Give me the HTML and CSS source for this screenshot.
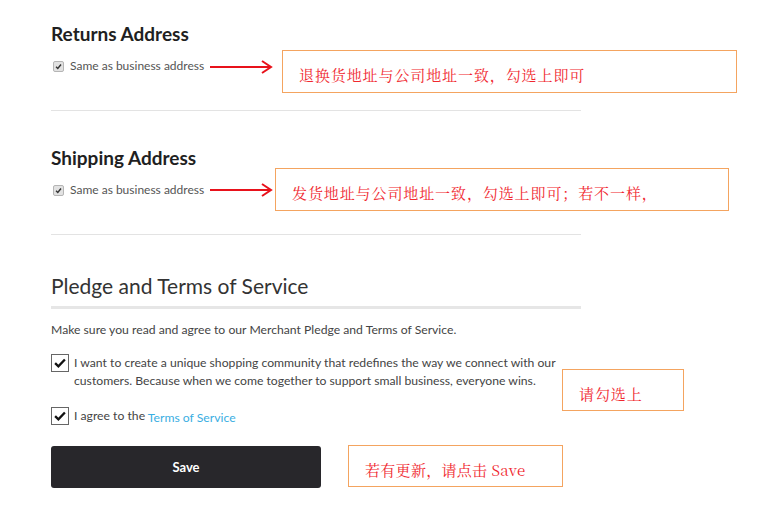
FILE: index.html
```html
<!DOCTYPE html>
<html lang="en">
<head>
    <meta charset="UTF-8">
    <title>Store Settings</title>
    <link rel="stylesheet" href="styles.css">
</head>
<body>
<div class="page">
    <div class="form">
        <section class="block">
            <h2 class="block-title">Returns Address</h2>
            <label class="small-check">
                <span class="mini-box"><svg viewBox="0 0 10 10"><path d="M2.3 5.2 L4.2 7.1 L7.8 2.8" fill="none" stroke="#333" stroke-width="1.6"/></svg></span>
                Same as business address
            </label>
        </section>
        <hr class="divider">
        <section class="block">
            <h2 class="block-title">Shipping Address</h2>
            <label class="small-check">
                <span class="mini-box"><svg viewBox="0 0 10 10"><path d="M2.3 5.2 L4.2 7.1 L7.8 2.8" fill="none" stroke="#333" stroke-width="1.6"/></svg></span>
                Same as business address
            </label>
        </section>
        <hr class="divider last">
        <section class="pledge">
            <h2 class="pledge-title">Pledge and Terms of Service</h2>
            <p class="pledge-intro">Make sure you read and agree to our Merchant Pledge and Terms of Service.</p>
            <label class="big-check">
                <span class="check-box"><svg viewBox="0 0 18 18"><path d="M3.5 9.2 L7.2 12.8 L14.5 5" fill="none" stroke="#111" stroke-width="2.6"/></svg></span>
                <span>I want to create a unique shopping community that redefines the way we connect with our customers. Because when we come together to support small business, everyone wins.</span>
            </label>
            <label class="big-check second">
                <span class="check-box"><svg viewBox="0 0 18 18"><path d="M3.5 9.2 L7.2 12.8 L14.5 5" fill="none" stroke="#111" stroke-width="2.6"/></svg></span>
                <span>I agree to the <a class="tos" href="#">Terms of Service</a></span>
            </label>
            <button class="save" type="button">Save</button>
        </section>
    </div>

    <svg class="arrow arrow-one" viewBox="0 0 64 14"><path d="M0 7 H61 M52 1 L61 7 L52 13" fill="none" stroke="#e8121b" stroke-width="2"/></svg>
    <div class="note note-one">退换货地址与公司地址一致，勾选上即可</div>

    <svg class="arrow arrow-two" viewBox="0 0 64 14"><path d="M0 7 H61 M52 1 L61 7 L52 13" fill="none" stroke="#e8121b" stroke-width="2"/></svg>
    <div class="note note-two">发货地址与公司地址一致，勾选上即可；若不一样，</div>

    <div class="note note-three">请勾选上</div>
    <div class="note note-four">若有更新，请点击 Save</div>
</div>
</body>
</html>
```

FILE: styles.css
```css
body {
    margin: 0;
    background: #fff;
    font-family: Lato, "Noto Sans", sans-serif;
    color: #333;
}
.page {
    position: relative;
    width: 761px;
    height: 509px;
    overflow: hidden;
}
.form {
    width: 530px;
    padding: 22px 0 0 51px;
}
.block-title {
    margin: 0;
    font-size: 19px;
    line-height: 24px;
    font-weight: 700;
    color: #1f1f22;
}
.small-check {
    display: flex;
    align-items: center;
    gap: 6px;
    margin-top: 12px;
    font-size: 12px;
    line-height: 16px;
    color: #555;
}
.mini-box {
    display: block;
    width: 9px;
    height: 9px;
    margin-left: 2px;
    border: 1px solid #b5b5b5;
    border-radius: 2px;
    background: #e2e2e2;
}
.mini-box svg {
    display: block;
    width: 9px;
    height: 9px;
}
.divider {
    margin: 36px 0 35px;
    border: 0;
    border-top: 1px solid #e3e3e3;
}
.divider.last {
    margin-bottom: 38px;
}
.pledge-title {
    margin: 0;
    padding-bottom: 7px;
    border-bottom: 3px solid #e6e6e6;
    font-size: 21px;
    line-height: 26px;
    font-weight: 400;
    color: #333;
}
.pledge-intro {
    margin: 13px 0 0;
    font-size: 12.2px;
    line-height: 16px;
    color: #444;
}
.big-check {
    display: flex;
    align-items: flex-start;
    gap: 5px;
    margin-top: 16px;
    font-size: 12.2px;
    line-height: 18px;
    color: #444;
}
.big-check.second {
    margin-top: 17px;
}
.check-box {
    flex: none;
    width: 16px;
    height: 16px;
    border: 1px solid #666;
    background: #fff;
}
.check-box svg {
    display: block;
    width: 16px;
    height: 16px;
}
.tos {
    position: relative;
    top: 2px;
    color: #3aaee2;
    text-decoration: none;
}
.save {
    display: block;
    width: 270px;
    height: 42px;
    margin-top: 21px;
    border: none;
    border-radius: 3px;
    background: #28272b;
    color: #fff;
    font-family: Lato, sans-serif;
    font-size: 13px;
    font-weight: 700;
}
.arrow {
    position: absolute;
    width: 64px;
    height: 14px;
}
.arrow-one {
    left: 210px;
    top: 60px;
}
.arrow-two {
    left: 210px;
    top: 183px;
}
.note {
    position: absolute;
    box-sizing: border-box;
    border: 1px solid #f4a460;
    background: #fff;
    color: #f0282f;
    font-family: "Noto Serif CJK SC", "Noto Sans CJK SC", serif;
    font-size: 15px;
    letter-spacing: 0.9px;
    line-height: 18px;
    padding: 15px 0 0 16px;
}
.note-one {
    left: 282px;
    top: 50px;
    width: 455px;
    height: 43px;
}
.note-two {
    left: 275px;
    top: 168px;
    width: 454px;
    height: 43px;
}
.note-three {
    left: 562px;
    top: 369px;
    width: 122px;
    height: 42px;
}
.note-four {
    left: 348px;
    top: 445px;
    width: 215px;
    height: 42px;
    letter-spacing: 0.3px;
}
```
